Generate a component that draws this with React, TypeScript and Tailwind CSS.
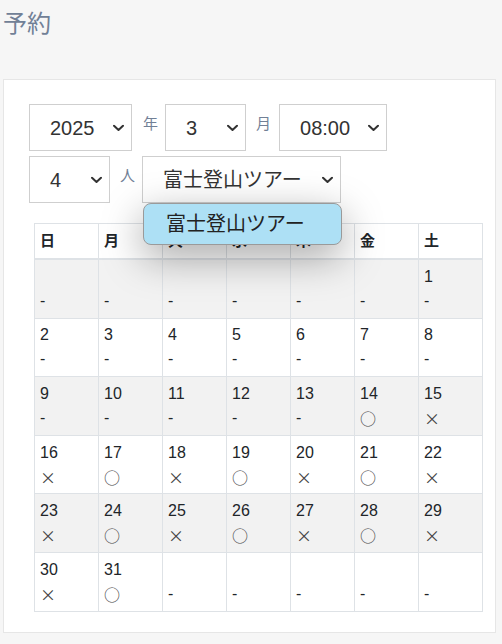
import React from "react";

const Chevron = () => (
  <svg
    className="pointer-events-none absolute right-[7px] top-1/2 -translate-y-1/2"
    width="11"
    height="7"
    viewBox="0 0 11 7"
    fill="none"
  >
    <path d="M1 1.2 L5.5 5.5 L10 1.2" stroke="#333" strokeWidth="2" strokeLinecap="round" strokeLinejoin="round" />
  </svg>
);

function FakeSelect({ value, width, children }: { value: string; width: string; children?: React.ReactNode }) {
  return (
    <div className={`relative h-[47px] shrink-0 border border-[#cfcfcf] bg-white ${width}`}>
      <select
        defaultValue={value}
        className="h-full w-full appearance-none bg-transparent pl-[20px] text-[20px] text-[#333] outline-none"
      >
        <option value={value}>{value}</option>
      </select>
      <Chevron />
      {children}
    </div>
  );
}

type Cell = { d: string; s: string };

const rows: Cell[][] = [
  [
    { d: "", s: "-" },
    { d: "", s: "-" },
    { d: "", s: "-" },
    { d: "", s: "-" },
    { d: "", s: "-" },
    { d: "", s: "-" },
    { d: "1", s: "-" },
  ],
  [
    { d: "2", s: "-" },
    { d: "3", s: "-" },
    { d: "4", s: "-" },
    { d: "5", s: "-" },
    { d: "6", s: "-" },
    { d: "7", s: "-" },
    { d: "8", s: "-" },
  ],
  [
    { d: "9", s: "-" },
    { d: "10", s: "-" },
    { d: "11", s: "-" },
    { d: "12", s: "-" },
    { d: "13", s: "-" },
    { d: "14", s: "○" },
    { d: "15", s: "×" },
  ],
  [
    { d: "16", s: "×" },
    { d: "17", s: "○" },
    { d: "18", s: "×" },
    { d: "19", s: "○" },
    { d: "20", s: "×" },
    { d: "21", s: "○" },
    { d: "22", s: "×" },
  ],
  [
    { d: "23", s: "×" },
    { d: "24", s: "○" },
    { d: "25", s: "×" },
    { d: "26", s: "○" },
    { d: "27", s: "×" },
    { d: "28", s: "○" },
    { d: "29", s: "×" },
  ],
  [
    { d: "30", s: "×" },
    { d: "31", s: "○" },
    { d: "", s: "-" },
    { d: "", s: "-" },
    { d: "", s: "-" },
    { d: "", s: "-" },
    { d: "", s: "-" },
  ],
];

const days = ["日", "月", "火", "水", "木", "金", "土"];

export default function App() {
  return (
    <div className="min-h-[644px] bg-[#f6f6f6] pt-[8px] font-['Liberation_Sans','Noto_Sans_CJK_JP',sans-serif]">
      <h1 className="pl-[3px] text-[24px] font-normal leading-[32px] text-[#718096]">予約</h1>
      <div className="ml-[3px] mt-[39px] w-[493px] border border-[#e6e6e6] bg-white px-[25px] pb-[20px] pt-[24px]">
        <div className="flex items-start">
          <FakeSelect value="2025" width="w-[103px]" />
          <span className="ml-[11px] mr-[7px] mt-[10px] text-[15px] leading-[20px] text-[#718096]">年</span>
          <FakeSelect value="3" width="w-[81px]" />
          <span className="ml-[10px] mr-[8px] mt-[10px] text-[15px] leading-[20px] text-[#718096]">月</span>
          <FakeSelect value="08:00" width="w-[108px]" />
        </div>
        <div className="mt-[5px] flex items-start">
          <FakeSelect value="4" width="w-[81px]" />
          <span className="ml-[10px] mr-[7px] mt-[10px] text-[15px] leading-[20px] text-[#718096]">人</span>
          <FakeSelect value="富士登山ツアー" width="w-[199px]">
            <div className="absolute left-0 top-[calc(100%+1px)] z-10 flex h-[42px] w-[199px] items-center rounded-[8px] border border-[#9a9a9a] bg-[#ade0f5] pl-[22px] text-[20px] text-[#222] shadow-[0_12px_40px_rgba(0,0,0,0.36)]">
              富士登山ツアー
            </div>
          </FakeSelect>
        </div>
        <table className="ml-[5px] mt-[20px] w-[448px] table-fixed border-collapse text-[16px] text-[#212529]">
          <thead>
            <tr>
              {days.map((d) => (
                <th
                  key={d}
                  className="w-[64px] border border-b-2 border-[#dee2e6] px-[5px] py-[5px] text-left text-[15px] font-bold leading-[24px]"
                >
                  {d}
                </th>
              ))}
            </tr>
          </thead>
          <tbody>
            {rows.map((r, i) => (
              <tr key={i} className={i % 2 === 0 ? "bg-[#f2f2f2]" : "bg-white"}>
                {r.map((c, j) => (
                  <td key={j} className="border border-[#dee2e6] px-[5px] py-[4.8px] align-top leading-[24px]">
                    <div>{c.d === "" ? "\u00a0" : c.d}</div>
                    {c.s === "-" ? (
                      <div>-</div>
                    ) : (
                      <div className="font-['Noto_Sans_CJK_JP',sans-serif] text-[16px] text-[#444]">{c.s}</div>
                    )}
                  </td>
                ))}
              </tr>
            ))}
          </tbody>
        </table>
      </div>
    </div>
  );
}
